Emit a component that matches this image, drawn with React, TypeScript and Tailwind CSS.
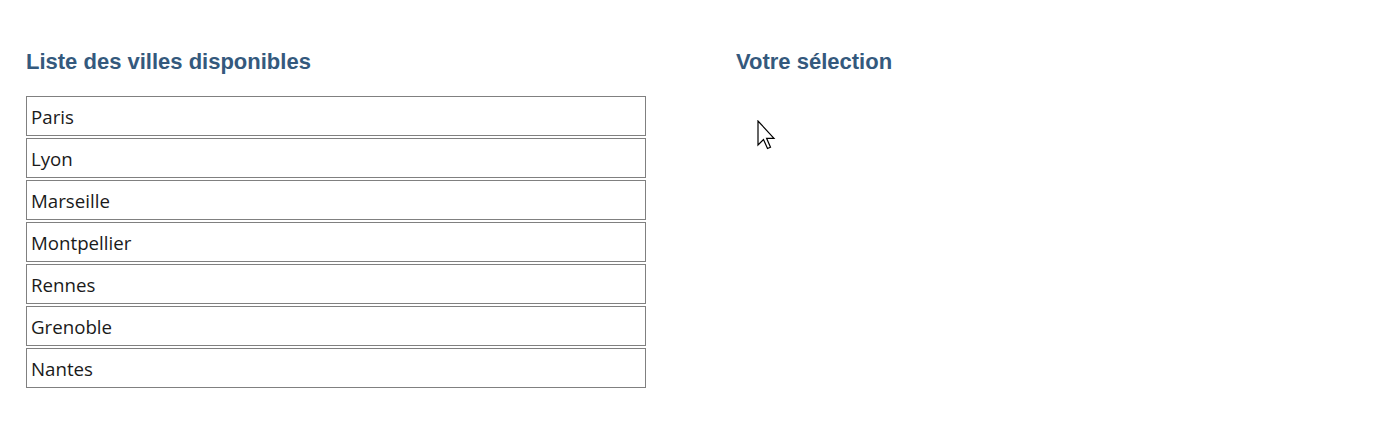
import React from "react";

const villes = ["Paris", "Lyon", "Marseille", "Montpellier", "Rennes", "Grenoble", "Nantes"];

function Cursor() {
  return (
    <svg
      className="absolute left-[757px] top-[120px]"
      width="20"
      height="34"
      viewBox="0 0 20 34"
    >
      <path
        d="M1 1 L1 25 L6.5 19.5 L10.5 28.5 L13.5 27.2 L9.6 18.3 L17 18.3 Z"
        fill="#ffffff"
        stroke="#000000"
        strokeWidth="1.2"
        strokeLinejoin="miter"
      />
    </svg>
  );
}

export default function App() {
  return (
    <div className="relative h-[440px] w-[1390px] bg-white">
      <div className="flex pl-[26px] pt-[48px]">
        <section className="w-[710px]">
          <h2 className="text-[22px] font-bold leading-[28px] text-[#34597d] [font-family:'Liberation_Sans',Arial,sans-serif]">
            Liste des villes disponibles
          </h2>
          <ul className="mt-[20px] flex w-[620px] flex-col gap-[2px]">
            {villes.map((v) => (
              <li
                key={v}
                className="flex h-[40px] items-center border border-[#808080] pl-[4px] pt-[2px] text-[18.7px] text-[#1a1a1a] [font-family:'Open_Sans',sans-serif]"
              >
                {v}
              </li>
            ))}
          </ul>
        </section>
        <section>
          <h2 className="text-[22px] font-bold leading-[28px] text-[#34597d] [font-family:'Liberation_Sans',Arial,sans-serif]">
            Votre sélection
          </h2>
        </section>
      </div>
      <Cursor />
    </div>
  );
}
